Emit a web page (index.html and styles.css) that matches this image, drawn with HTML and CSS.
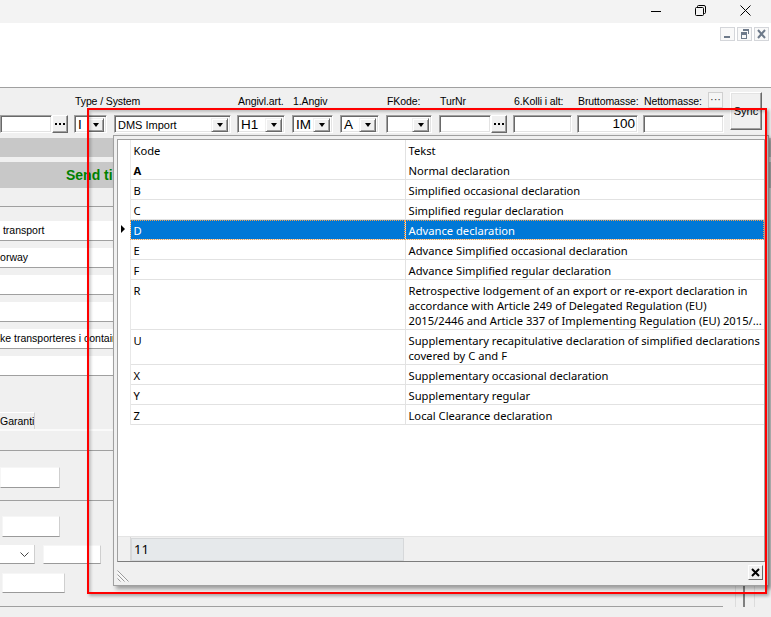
FILE: index.html
```html
<!DOCTYPE html>
<html>
<head>
    <title>Angivelse</title>
    <link rel="stylesheet" href="styles.css">
</head>
<body>
    <div class="titlebar">
        <div class="win-btn">
            <svg width="10" height="10" viewBox="0 0 10 10"><path d="M0 5.5h10" stroke="#000" stroke-width="1"/></svg>
        </div>
        <div class="win-btn">
            <svg width="11" height="11" viewBox="0 0 11 11"><path d="M2.5 2.5V1.5q0-1 1-1h5.5q1.5 0 1.5 1.5v5.5q0 1-1 1h-1" fill="none" stroke="#000"/><rect x="0.5" y="2.5" width="8" height="8" rx="1" fill="none" stroke="#000"/></svg>
        </div>
        <div class="win-btn">
            <svg width="11" height="11" viewBox="0 0 11 11"><path d="M0.5 0.5l10 10M10.5 0.5l-10 10" stroke="#000" stroke-width="1"/></svg>
        </div>
    </div>

    <div class="mdi-area">
        <div class="mdi-btn">
            <svg width="13" height="12" viewBox="0 0 13 12"><rect x="3" y="8" width="6" height="2" fill="#6e7a8a"/></svg>
        </div>
        <div class="mdi-btn">
            <svg width="13" height="12" viewBox="0 0 13 12"><path d="M5 1h6v5h-1V3H5z" fill="#6e7a8a"/><path d="M3 4h6v7H3z M4 7v3h4V7z" fill="#6e7a8a" fill-rule="evenodd"/></svg>
        </div>
        <div class="mdi-btn">
            <svg width="13" height="12" viewBox="0 0 13 12"><path d="M3 2l7 8M10 2l-7 8" stroke="#6e7a8a" stroke-width="2"/></svg>
        </div>
    </div>

    <div class="form">
        <div class="toolbar">
            <div class="field f-ref">
                <div class="label"></div>
                <div class="box">
                    <div class="input"></div>
                    <div class="dots"><svg width="10" height="2"><rect x="0" y="0" width="2" height="2"/><rect x="4" y="0" width="2" height="2"/><rect x="8" y="0" width="2" height="2"/></svg></div>
                </div>
            </div>
            <div class="field f-type">
                <div class="label">Type / System</div>
                <div class="combo big"><span class="combo-text">I</span><span class="drop"></span></div>
            </div>
            <div class="field f-system">
                <div class="label"></div>
                <div class="combo"><span class="combo-text">DMS Import</span><span class="drop"></span></div>
            </div>
            <div class="field f-angivl">
                <div class="label">Angivl.art.</div>
                <div class="combo big"><span class="combo-text">H1</span><span class="drop"></span></div>
            </div>
            <div class="field f-angiv">
                <div class="label">1.Angiv</div>
                <div class="combo big"><span class="combo-text">IM</span><span class="drop"></span></div>
            </div>
            <div class="field f-a">
                <div class="label"></div>
                <div class="combo big"><span class="combo-text">A</span><span class="drop"></span></div>
            </div>
            <div class="field f-fkode">
                <div class="label">FKode:</div>
                <div class="combo"><span class="combo-text"></span><span class="drop"></span></div>
            </div>
            <div class="field f-turnr">
                <div class="label">TurNr</div>
                <div class="box">
                    <div class="input"></div>
                    <div class="dots"><svg width="10" height="2"><rect x="0" y="0" width="2" height="2"/><rect x="4" y="0" width="2" height="2"/><rect x="8" y="0" width="2" height="2"/></svg></div>
                </div>
            </div>
            <div class="field f-kolli">
                <div class="label">6.Kolli i alt:</div>
                <div class="input"></div>
            </div>
            <div class="field f-brutto">
                <div class="label">Bruttomasse:</div>
                <div class="input num">100</div>
            </div>
            <div class="field f-netto">
                <div class="label label-row">Nettomasse: <span class="small-btn">···</span></div>
                <div class="input"></div>
            </div>
            <div class="sync">Sync</div>
        </div>

        <div class="bar"></div>
        <div class="bar send">Send til</div>

        <div class="body">
            <div class="body-left">
                <div class="hr sep"></div>
                <div class="lfields">
                    <div class="lfield">&nbsp;transport</div>
                    <div class="lfield"><span class="cut">Norway</span></div>
                    <div class="lfield"></div>
                    <div class="lfield"></div>
                    <div class="lfield"><span class="cut2">ikke transporteres i container</span></div>
                    <div class="lfield"></div>
                </div>
                <div class="tab">Garanti</div>
                <div class="tab-panel">
                    <div class="hr hr1"></div>
                    <div class="tfield t1"></div>
                    <div class="hr hr2"></div>
                    <div class="tfield t2"></div>
                    <div class="trow">
                        <div class="tcombo">
                            <svg width="9" height="5" viewBox="0 0 9 5"><path d="M0.5 0.5l4 4 4-4" fill="none" stroke="#444"/></svg>
                        </div>
                        <div class="tfield t3"></div>
                    </div>
                    <div class="tfield t4"></div>
                </div>
                <div class="hr bottom-line"></div>
            </div>
            <div class="vscroll"></div>
        </div>
    </div>

    <div class="popup">
        <div class="grid">
            <table class="lookup">
                <colgroup><col class="col-rh"><col class="col-kode"><col></colgroup>
                <thead>
                    <tr><th class="rh"></th><th>Kode</th><th class="tekst">Tekst</th></tr>
                </thead>
                <tbody>
                    <tr><td class="rh"></td><td class="strong">A</td><td class="tekst">Normal declaration</td></tr>
                    <tr><td class="rh"></td><td>B</td><td class="tekst">Simplified occasional declaration</td></tr>
                    <tr><td class="rh"></td><td>C</td><td class="tekst">Simplified regular declaration</td></tr>
                    <tr class="sel"><td class="rh"><span class="pointer"></span></td><td>D</td><td class="tekst">Advance declaration</td></tr>
                    <tr><td class="rh"></td><td>E</td><td class="tekst">Advance Simplified occasional declaration</td></tr>
                    <tr><td class="rh"></td><td>F</td><td class="tekst">Advance Simplified regular declaration</td></tr>
                    <tr><td class="rh"></td><td>R</td><td class="tekst">Retrospective lodgement of an export or re-export declaration in<br>accordance with Article 249 of Delegated Regulation (EU)<br>2015/2446 and Article 337 of Implementing Regulation (EU) 2015/...</td></tr>
                    <tr><td class="rh"></td><td>U</td><td class="tekst">Supplementary recapitulative declaration of simplified declarations<br>covered by C and F</td></tr>
                    <tr><td class="rh"></td><td>X</td><td class="tekst">Supplementary occasional declaration</td></tr>
                    <tr><td class="rh"></td><td>Y</td><td class="tekst">Supplementary regular</td></tr>
                    <tr><td class="rh"></td><td>Z</td><td class="tekst">Local Clearance declaration</td></tr>
                </tbody>
            </table>
            <div class="grid-fill"></div>
            <div class="grid-foot">
                <div class="foot-rh"></div>
                <div class="count">11</div>
            </div>
        </div>
        <div class="popup-bottom">
            <svg class="grip" width="13" height="13" viewBox="0 0 13 13">
                <path d="M0.5 1.5l11 11M0.5 5.5l7 7M0.5 9.5l3 3" stroke="#9a9a9a" stroke-width="1"/>
                <path d="M0.5 3l9.5 9.5M0.5 7l5.5 5.5" stroke="#ffffff" stroke-width="1"/>
            </svg>
            <div class="close-btn">
                <svg width="9" height="9" viewBox="0 0 9 9"><path d="M1 1l7 7M8 1l-7 7" stroke="#000" stroke-width="2"/></svg>
            </div>
        </div>
    </div>

    <div class="highlight"></div>
</body>
</html>
```

FILE: styles.css
```css
body {
    margin: 0;
    width: 771px;
    height: 617px;
    overflow: hidden;
    font-family: "Liberation Sans", Arial, sans-serif;
    font-size: 11px;
    color: #000;
    background-color: #f0f0f0;
    position: relative;
}

/* window chrome */
.titlebar {
    height: 23px;
    background-color: #f3f3f3;
    display: flex;
    justify-content: flex-end;
    padding-right: 3px;
}
.win-btn {
    width: 45px;
    height: 21px;
    display: flex;
    align-items: center;
    justify-content: center;
}
.mdi-area {
    height: 64px;
    box-sizing: border-box;
    background-color: #fff;
    display: flex;
    justify-content: flex-end;
    align-items: flex-start;
    gap: 2px;
    padding: 4px 2px 0 0;
}
.mdi-btn {
    width: 15px;
    height: 14px;
    box-sizing: border-box;
    border: 1px solid #d4d6da;
    background-color: #f9f9f9;
    display: flex;
    align-items: center;
    justify-content: center;
}

/* form */
.form {
    border-top: 1px solid #a0a0a0;
}
.toolbar {
    display: flex;
    align-items: flex-start;
    padding-top: 4px;
    height: 41px;
}
.field {
    display: flex;
    flex-direction: column;
}
.label {
    height: 23px;
    line-height: 18px;
    padding-left: 1px;
    font-size: 10.5px;
    letter-spacing: -0.1px;
    white-space: nowrap;
}
.label-row {
    display: flex;
    justify-content: space-between;
    padding-right: 1px;
}
.small-btn {
    width: 15px;
    height: 16px;
    box-sizing: border-box;
    border: 1px solid #d0d0d0;
    background-color: #f5f5f5;
    line-height: 12px;
    text-align: center;
    font-size: 11px;
    letter-spacing: 0;
    color: #333;
}
.f-ref { width: 68px; margin-right: 6px; }
.f-type { width: 33px; margin-right: 7px; }
.f-system { width: 117px; margin-right: 6px; }
.f-angivl { width: 48px; margin-right: 7px; }
.f-angiv { width: 41px; margin-right: 7px; }
.f-a { width: 39px; margin-right: 7px; }
.f-fkode { width: 46px; margin-right: 7px; }
.f-turnr { width: 68px; margin-right: 6px; }
.f-kolli { width: 59px; margin-right: 5px; }
.f-brutto { width: 61px; margin-right: 5px; }
.f-netto { width: 81px; margin-right: 6px; }

.input,
.combo {
    height: 18px;
    box-sizing: border-box;
    background-color: #fff;
    border: 1px solid;
    border-color: #a0a0a0 #fff #fff #a0a0a0;
    box-shadow: inset 1px 1px 0 #696969, inset -1px -1px 0 #e3e3e3;
}
.box {
    display: flex;
    height: 18px;
}
.box .input {
    flex: 1;
}
.num {
    font-size: 13.5px;
    line-height: 16px;
    text-align: right;
    padding-right: 2px;
}
.dots {
    width: 16px;
    height: 18px;
    box-sizing: border-box;
    background-color: #f0f0f0;
    border: 1px solid;
    border-color: #fff #696969 #696969 #fff;
    box-shadow: inset -1px -1px 0 #a0a0a0;
    display: flex;
    align-items: center;
    justify-content: center;
}
.dots svg {
    fill: #000;
}
.combo {
    display: flex;
    padding: 2px;
}
.combo-text {
    flex: 1;
    line-height: 14px;
    padding-left: 1px;
    white-space: nowrap;
}
.combo.big .combo-text {
    font-size: 13.5px;
}
.drop {
    width: 17px;
    height: 14px;
    box-sizing: border-box;
    background-color: #f0f0f0;
    border: 1px solid;
    border-color: #f0f0f0 #696969 #696969 #f0f0f0;
    box-shadow: inset 1px 1px 0 #fff, inset -1px -1px 0 #a0a0a0;
    display: flex;
    align-items: center;
    justify-content: center;
}
.drop::after {
    content: "";
    border-left: 3.5px solid transparent;
    border-right: 3.5px solid transparent;
    border-top: 4px solid #000;
}
.sync {
    width: 32px;
    height: 38px;
    box-sizing: border-box;
    background-color: #f0f0f0;
    border: 1px solid;
    border-color: #fff #696969 #696969 #fff;
    box-shadow: inset -1px -1px 0 #a0a0a0, inset 1px 1px 0 #e3e3e3;
    text-align: center;
    padding-top: 13px;
    line-height: 11px;
}

.bar {
    height: 19px;
    margin-top: 5px;
    background-color: #c8c8c8;
}
.bar.send {
    height: 26px;
    line-height: 26px;
    padding-left: 66px;
    font-size: 14px;
    font-weight: bold;
    color: #008000;
    white-space: nowrap;
}

.body {
    display: flex;
}
.body-left {
    width: 723px;
}
.hr {
    height: 1px;
    background-color: #a0a0a0;
}
.sep {
    margin-top: 18px;
}
.lfields {
    padding-top: 14px;
    width: 113px;
}
.lfield {
    height: 19px;
    margin-bottom: 7px;
    background-color: #fff;
    border-bottom: 1px solid #a0a0a0;
    line-height: 18px;
    font-size: 10.5px;
    white-space: nowrap;
    overflow: hidden;
}
.cut {
    margin-left: -7.5px;
}
.cut2 {
    margin-left: -7.6px;
}

.tab {
    margin-top: 36px;
    width: 35px;
    height: 17px;
    box-sizing: border-box;
    border-top: 1px solid #fff;
    border-right: 1px solid #d2d2d2;
    line-height: 16px;
    font-size: 10.5px;
    white-space: nowrap;
    overflow: hidden;
}
.tab-panel {
    width: 113px;
    border-top: 2px solid #fafafa;
}
.hr1 {
    margin-top: 19px;
}
.tfield {
    height: 21px;
    box-sizing: border-box;
    background-color: #fff;
    border: 1px solid;
    border-color: #f6f6f6 #cfcfcf #9a9a9a #f6f6f6;
}
.t1 {
    width: 60px;
    margin-top: 16px;
}
.hr2 {
    margin-top: 12px;
}
.t2 {
    width: 58px;
    margin-left: 2px;
    margin-top: 15px;
}
.trow {
    display: flex;
    margin-top: 8px;
    gap: 8px;
}
.tcombo {
    width: 35px;
    height: 19px;
    box-sizing: border-box;
    background-color: #fff;
    border-bottom: 1px solid #9a9a9a;
    border-right: 1px solid #cfcfcf;
    display: flex;
    align-items: center;
    justify-content: flex-end;
    padding-right: 5px;
}
.t3 {
    width: 58px;
    height: 19px;
}
.t4 {
    width: 63px;
    height: 20px;
    margin-left: 2px;
    margin-top: 9px;
}
.bottom-line {
    margin-top: 13px;
    width: 723px;
}
.vscroll {
    margin-left: 12px;
    width: 18px;
    border-left: 1px solid #dcdcdc;
    border-right: 1px solid #dcdcdc;
    background: linear-gradient(to right, transparent 7px, #808080 7px, #808080 9px, transparent 9px);
}

/* lookup popup */
.popup {
    position: absolute;
    left: 113px;
    top: 135px;
    width: 656px;
    height: 451px;
    box-sizing: border-box;
    background-color: #f0f0f0;
    border: 1px solid #a0a0a0;
    padding: 3px 3px 0 3px;
    box-shadow: 3px 3px 4px rgba(0, 0, 0, 0.35);
    display: flex;
    flex-direction: column;
    font-family: "Noto Sans", "Open Sans", sans-serif;
    font-size: 11.2px;
}
.grid {
    height: 423px;
    box-sizing: border-box;
    border: 1px solid #a0a0a0;
    border-bottom-color: #7c7c7c;
    background-color: #fff;
    display: flex;
    flex-direction: column;
}
.lookup {
    width: 100%;
    border-collapse: collapse;
    table-layout: fixed;
}
.col-rh { width: 12px; }
.col-kode { width: 275px; }
.lookup th,
.lookup td {
    text-align: left;
    font-weight: normal;
    padding: 3px 3px 1px 3px;
    line-height: 15px;
    vertical-align: top;
    white-space: nowrap;
    overflow: hidden;
}
.lookup th {
    height: 16px;
}
.lookup td {
    border-bottom: 1px solid #e2e2e2;
}
.lookup .tekst {
    border-left: 1px solid #e2e2e2;
}
.lookup .rh {
    padding: 0;
    border-bottom: none;
    border-right: 1px solid #e8e8e8;
    position: relative;
}
.lookup .strong {
    font-weight: bold;
}
.sel td:not(.rh) {
    background-color: #0078d7;
    color: #fff;
    outline: 1px dotted #f0a050;
    outline-offset: -1px;
}
.pointer {
    position: absolute;
    left: 3px;
    top: 5px;
    border-top: 4px solid transparent;
    border-bottom: 4px solid transparent;
    border-left: 4px solid #000;
}
.grid-fill {
    flex: 1;
}
.grid-foot {
    height: 24px;
    display: flex;
    background-color: #f0f0f0;
    border-top: 1px solid #e4e4e4;
}
.foot-rh {
    width: 12px;
    border-right: 1px solid #d8d8d8;
}
.count {
    width: 273px;
    box-sizing: border-box;
    background-color: #e6e9eb;
    border: 1px solid #d6d8da;
    margin-top: 1px;
    padding-left: 2px;
    line-height: 21px;
    font-size: 13px;
}
.popup-bottom {
    height: 23px;
    display: flex;
    justify-content: space-between;
    align-items: flex-start;
    padding-right: 2px;
}
.grip {
    margin-top: 7px;
}
.close-btn {
    margin-top: 3px;
    width: 15px;
    height: 15px;
    box-sizing: border-box;
    background-color: #f0f0f0;
    border: 1px solid;
    border-color: #fff #696969 #696969 #fff;
    display: flex;
    align-items: center;
    justify-content: center;
}

/* red marker drawn over the screenshot */
.highlight {
    position: absolute;
    left: 87px;
    top: 108px;
    width: 680px;
    height: 486px;
    box-sizing: border-box;
    border: 2px solid #ff0000;
    box-shadow: 2px 2px 3px rgba(0, 0, 0, 0.3), inset 2px 2px 3px rgba(0, 0, 0, 0.2);
}
```
